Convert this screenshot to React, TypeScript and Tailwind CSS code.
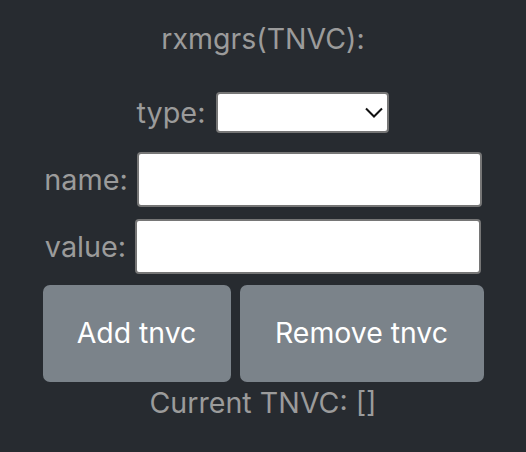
import React from "react";

export default function App() {
  return (
    <div
      className="w-[526px] h-[452px] bg-[#272b30] flex flex-col items-center text-[#9b9b9b]"
      style={{ fontFamily: "Inter, 'Noto Sans', sans-serif" }}
    >
      <div className="mt-[22px] h-[34px] text-[28.5px] leading-[34px]">rxmgrs(TNVC):</div>
      <div className="mt-[36px] flex items-center gap-[11px]">
        <span className="text-[28.8px] leading-[34px]">type:</span>
        <div className="relative w-[173px] h-[41px]">
          <select className="appearance-none w-full h-full bg-white border-2 border-[#767676] rounded-[4px] outline-none" />
          <svg
            className="absolute right-[6px] top-[15px] pointer-events-none"
            width="18"
            height="11"
            viewBox="0 0 18 11"
            fill="none"
          >
            <path d="M1 1.5 L9 9.5 L17 1.5" stroke="#111" strokeWidth="2" />
          </svg>
        </div>
      </div>
      <div className="mt-[19px] flex items-center gap-[9px]">
        <span className="text-[28.8px] leading-[34px]">name:</span>
        <input className="w-[345px] h-[55px] bg-white border-2 border-[#767676] rounded-[4px] outline-none" />
      </div>
      <div className="mt-[12px] flex items-center gap-[9px]">
        <span className="text-[28.8px] leading-[34px]">value:</span>
        <input className="w-[346px] h-[55px] bg-white border-2 border-[#767676] rounded-[4px] outline-none" />
      </div>
      <div className="mt-[11px] flex gap-[9px]">
        <button className="h-[97px] w-[188px] bg-[#7b838a] rounded-[7px] text-white text-[28.4px]">
          Add tnvc
        </button>
        <button className="h-[97px] w-[244px] bg-[#7b838a] rounded-[7px] text-white text-[28.4px]">
          Remove tnvc
        </button>
      </div>
      <div className="mt-[4px] text-[28.6px] leading-[34px]">Current TNVC: []</div>
    </div>
  );
}
